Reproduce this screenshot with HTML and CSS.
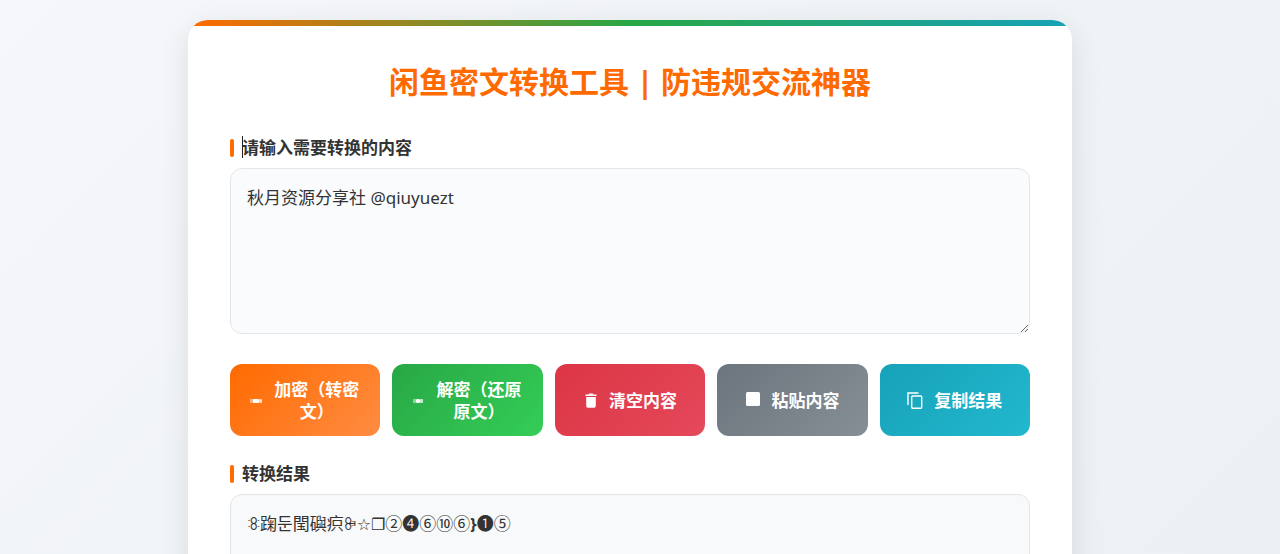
FILE: index.html
```html
<!DOCTYPE html>
<html lang="zh-CN">
<head>
<meta charset="utf-8">
<title>闲鱼密文转换工具</title>
<link rel="stylesheet" href="styles.css">
</head>
<body>
<main class="card">
  <h1 class="title">闲鱼密文转换工具 | 防违规交流神器</h1>
  <label class="field-label" for="source"><span class="caret"></span>请输入需要转换的内容</label>
  <textarea class="box source" id="source" spellcheck="false">秋月资源分享社 @qiuyuezt</textarea>
  <div class="actions">
    <button class="btn encrypt" type="button">
      <svg width="12" height="16" viewBox="0 0 12 16" fill="#fff"><rect y="6" width="4" height="4" opacity=".45"/><rect x="3" y="6" width="6" height="4" rx="1"/><rect x="9" y="6" width="3" height="4" rx="1" opacity=".75"/></svg>
      <span>加密（转密文）</span>
    </button>
    <button class="btn decrypt" type="button">
      <svg width="12" height="16" viewBox="0 0 12 16" fill="#fff"><rect x="1" y="6" width="3" height="4" opacity=".45"/><rect x="4" y="6" width="4" height="4" rx="1"/><rect x="8" y="6" width="3" height="4" rx="1" opacity=".75"/></svg>
      <span>解密（还原原文）</span>
    </button>
    <button class="btn clear" type="button">
      <svg width="15" height="18" viewBox="0 0 15 18" fill="#fff"><path d="M2.5 2.5H5.5L6.3 1.5H9.7L10.5 2.5H13.5V4H2.5zM3.2 5H12.8V14Q12.8 15.8 11 15.8H5Q3.2 15.8 3.2 14z"/></svg>
      <span>清空内容</span>
    </button>
    <button class="btn paste" type="button">
      <svg width="15" height="18" viewBox="0 0 15 18" fill="#fff"><rect x="1" width="14" height="14" rx="1.5"/></svg>
      <span>粘贴内容</span>
    </button>
    <button class="btn copy" type="button">
      <svg width="16" height="18" viewBox="0 0 16 18" fill="none" stroke="#fff" stroke-width="1.4"><path d="M1 13V1H11.5"/><rect x="4.7" y="4" width="10" height="12.3" rx="1"/></svg>
      <span>复制结果</span>
    </button>
  </div>
  <label class="field-label" for="result">转换结果</label>
  <output class="box result" id="result">ꖊ踘둔閠礖疻ꔭ<span class="symbol">☆❐</span>②❹⑥⑩⑥<span class="symbol brace">}</span>❶⑤</output>
</main>
</body>
</html>
```
FILE: styles.css
```css
* { box-sizing: border-box; }

html { min-height: 100%; background: linear-gradient(135deg, #f5f7fa, #ebf0f3); }

body {
  margin: 0;
  padding: 20px 40px 20px 20px;
  font-family: "Noto Sans", "Noto Sans CJK SC", sans-serif;
  color: #333;
  overflow: hidden;
}

.card {
  position: relative;
  max-width: 884px;
  margin: 0 auto;
  padding: 40px 42px;
  background: #fff;
  border-radius: 20px;
  box-shadow: 0 8px 30px rgba(0, 0, 0, .1);
  overflow: hidden;
}

.card::before {
  content: "";
  position: absolute;
  inset: 0 0 auto;
  height: 6px;
  background: linear-gradient(90deg, #ff6a00, #28a745, #17a2b8);
}

.title {
  margin: 0 0 32px;
  font-size: 30px;
  line-height: 44px;
  text-align: center;
  color: #ff6a00;
}

.field-label {
  position: relative;
  display: flex;
  align-items: center;
  gap: 8px;
  margin-bottom: 8px;
  font-size: 17px;
  font-weight: 700;
  line-height: 24px;
}

.field-label::before {
  content: "";
  width: 4px;
  height: 18px;
  border-radius: 2px;
  background: #ff6a00;
}

.caret {
  position: absolute;
  left: 12px;
  top: 0;
  width: 1px;
  height: 22px;
  background: #222;
}

.box {
  display: block;
  width: 100%;
  padding: 16px;
  border: 1px solid #e3e5e8;
  border-radius: 12px;
  background: #fafbfd;
  color: #333;
  font: inherit;
  font-size: 17px;
  line-height: 26px;
}

.source { height: 166px; resize: vertical; outline: 0; }

.result { min-height: 120px; background: #f8f9fa; }

.symbol { font-family: "DejaVu Sans", sans-serif; font-size: 16px; }

.brace { font-family: "Noto Sans", sans-serif; font-weight: 700; }

.actions {
  display: grid;
  grid-template-columns: repeat(5, 1fr);
  gap: 12px;
  margin: 30px 0 26px;
}

.btn {
  display: flex;
  align-items: center;
  justify-content: center;
  gap: 11px;
  min-height: 72px;
  padding: 15px 20px 13px;
  border: 0;
  border-radius: 12px;
  color: #fff;
  font: inherit;
  font-size: 17px;
  font-weight: 700;
  line-height: 22px;
}

.btn svg { flex: none; }
.encrypt { background: linear-gradient(135deg, #ff6a00, #ff8c42); }
.decrypt { background: linear-gradient(135deg, #28a745, #34ce57); }
.clear { background: linear-gradient(135deg, #dc3545, #e4495a); }
.paste { background: linear-gradient(135deg, #6c757d, #868e96); }
.copy { background: linear-gradient(135deg, #17a2b8, #22b8cf); }
```
